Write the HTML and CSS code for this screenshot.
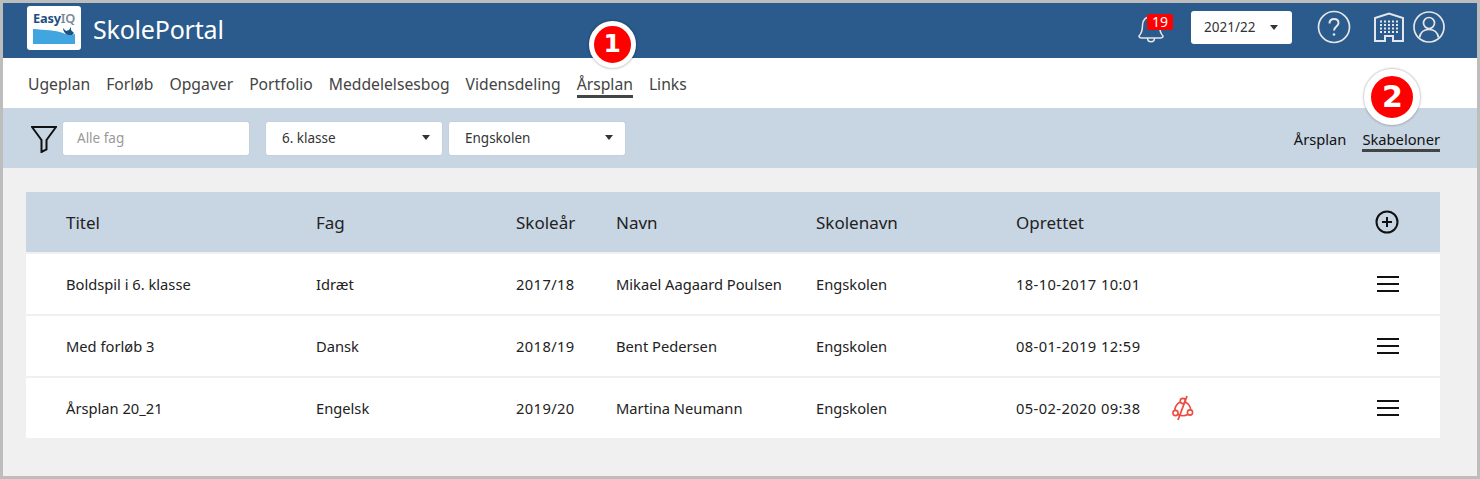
FILE: index.html
```html
<!DOCTYPE html>
<html lang="da">
<head>
<meta charset="utf-8">
<title>SkolePortal</title>
<link rel="stylesheet" href="styles.css">
</head>
<body>
<div class="frame">
  <header class="topbar">
    <div class="brand">
      <div class="logo">
        <span class="logo-text">Easy<b>IQ</b></span>
        <svg class="logo-art" width="42" height="18" viewBox="0 0 42 18"><path d="M0 2 C12 3 22 3 30 6 C34 8 38 8 42 7 V17 H0Z" fill="#41a5e0"/><path d="M30 1 L33 4 L36 3 L38 0 L38 3 L41 6 L39 8 L35 8 C32 7 30 4 30 1Z" fill="#1d4f80"/></svg>
      </div>
      <span class="brand-name">SkolePortal</span>
    </div>
    <div class="top-actions">
      <div class="bell">
        <svg width="28" height="30" viewBox="0 0 28 30" fill="none" stroke="#e6e6e6" stroke-width="1.5"><path d="M2 23 C5 20 5.500 16 5.500 12 C5.500 7 9 3.500 14 3.500 C19 3.500 22.500 7 22.500 12 C22.500 16 23 20 26 23 C26 24.500 25 25 23 25 H5 C3 25 2 24.500 2 23Z"/><path d="M10.500 25 C10.500 30 17.500 30 17.500 25"/></svg>
        <span class="count">19</span>
      </div>
      <div class="year-select"><span>2021/22</span><i class="caret"></i></div>
      <svg class="help" width="34" height="34" viewBox="0 0 34 34" fill="none" stroke="#e6e6e6" stroke-width="1.700"><circle cx="17" cy="17" r="15.500"/><path d="M12.500 13.500 C12.500 10.500 14.500 9 17 9 C19.700 9 21.500 10.700 21.500 13 C21.500 16.500 17 16.500 17 20.500" stroke-width="2"/><circle cx="17" cy="24.500" r="1.300" fill="#e6e6e6" stroke="none"/></svg>
      <svg class="school" width="30" height="30" viewBox="0 0 30 30" fill="none" stroke="#e3e6ea" stroke-width="2"><path d="M1 29 V6 L15 1.500 L29 6 V29 H19 V24 H11 V29Z"/><path d="M6 9.500h18M6 13h18M6 16.500h18M6 20h18" stroke-dasharray="2 2" stroke-width="2"/></svg>
      <svg class="user" width="32" height="32" viewBox="0 0 32 32" fill="none" stroke="#e6e6e6" stroke-width="1.700"><circle cx="16" cy="16" r="15"/><circle cx="16" cy="12" r="5.500"/><path d="M6.500 26.500 C7.500 20.500 11 18.500 16 18.500 C21 18.500 24.500 20.500 25.500 26.500"/></svg>
    </div>
  </header>

  <nav class="mainnav">
    <a>Ugeplan</a>
    <a>Forløb</a>
    <a>Opgaver</a>
    <a>Portfolio</a>
    <a>Meddelelsesbog</a>
    <a>Vidensdeling</a>
    <a class="active">Årsplan<span class="marker marker-one">1</span></a>
    <a>Links</a>
  </nav>

  <section class="filterbar">
    <svg class="funnel" width="26" height="28" viewBox="0 0 26 28" fill="none" stroke="#111" stroke-width="2"><path d="M1 2 H25 L15.500 15 V24.500 L10.500 27 V15Z"/></svg>
    <div class="field field-subject">Alle fag</div>
    <div class="field field-select"><span>6. klasse</span><i class="caret"></i></div>
    <div class="field field-select field-school"><span>Engskolen</span><i class="caret"></i></div>
    <div class="tabs">
      <a>Årsplan</a>
      <a class="active">Skabeloner<span class="marker marker-two">2</span></a>
    </div>
  </section>

  <main class="content">
    <div class="table">
      <div class="row head">
        <span>Titel</span><span>Fag</span><span>Skoleår</span><span>Navn</span><span>Skolenavn</span><span>Oprettet</span><span></span>
        <svg class="icon-right" width="24" height="24" viewBox="0 0 24 24" fill="none" stroke="#111" stroke-width="2"><circle cx="12" cy="12" r="10.500"/><path d="M7 12h10M12 7v10"/></svg>
      </div>
      <div class="row">
        <span>Boldspil i 6. klasse</span><span>Idræt</span><span class="num">2017/18</span><span>Mikael Aagaard Poulsen</span><span>Engskolen</span><span class="num">18-10-2017 10:01</span><span></span>
        <svg class="icon-right" width="22" height="18" viewBox="0 0 22 18" stroke="#111" stroke-width="2"><path d="M0 2h22M0 9h22M0 16h22"/></svg>
      </div>
      <div class="row">
        <span>Med forløb 3</span><span>Dansk</span><span class="num">2018/19</span><span>Bent Pedersen</span><span>Engskolen</span><span class="num">08-01-2019 12:59</span><span></span>
        <svg class="icon-right" width="22" height="18" viewBox="0 0 22 18" stroke="#111" stroke-width="2"><path d="M0 2h22M0 9h22M0 16h22"/></svg>
      </div>
      <div class="row">
        <span>Årsplan 20_21</span><span>Engelsk</span><span class="num">2019/20</span><span>Martina Neumann</span><span>Engskolen</span><span class="num">05-02-2020 09:38</span>
        <svg class="share" width="22" height="26" viewBox="0 0 22 26" fill="none" stroke="#ee4c40" stroke-width="1.600"><path d="M8 7 C4.500 9 3 12 2.800 15.500M13.500 7 C17 9 18.500 12 18.700 15"/><path d="M6 19.500 C9 21 13 21 16 19.500"/><circle cx="10.800" cy="6" r="2.600"/><circle cx="3.500" cy="18" r="2.600"/><circle cx="18" cy="17.500" r="2.600"/><path d="M15 1 L6 25" stroke-width="1.800"/></svg>
        <svg class="icon-right" width="22" height="18" viewBox="0 0 22 18" stroke="#111" stroke-width="2"><path d="M0 2h22M0 9h22M0 16h22"/></svg>
      </div>
    </div>
  </main>
</div>
</body>
</html>
```

FILE: styles.css
```css
* { box-sizing: border-box; }
html, body { margin: 0; height: 100%; }
body {
  font-family: "Noto Sans", "Open Sans", "DejaVu Sans", sans-serif;
  color: #222;
  background: #f0f0f0;
}
.frame {
  width: 1480px;
  height: 479px;
  border: 3px solid #bdbdbd;
  overflow: hidden;
  background: #f0f0f0;
  display: flex;
  flex-direction: column;
}
.topbar {
  height: 55px;
  background: #2a5b8c;
  display: flex;
  align-items: center;
  justify-content: space-between;
  padding: 0 32px 7px 24px;
  flex: none;
}
.brand { display: flex; align-items: center; gap: 12px; }
.logo {
  width: 54px;
  height: 44px;
  background: #fff;
  border-radius: 3px;
  padding: 4px 5px 0 6px;
  display: flex;
  flex-direction: column;
  gap: 1px;
  margin-top: 1px;
}
.logo-text { font-size: 12.8px; line-height: 16px; font-weight: 700; color: #1d4f80; white-space: nowrap; letter-spacing: -0.2px; }
.logo-text b { color: #7d8a96; font-weight: 600; }
.logo-art { display: block; }
.brand-name { color: #fff; font-size: 25px; letter-spacing: -0.2px; line-height: 30px; margin-top: 3px; }
.top-actions { display: flex; align-items: center; }
.bell { position: relative; width: 28px; height: 30px; margin-right: 26px; margin-top: 2px; }
.bell svg { display: block; }
.count {
  position: absolute;
  left: 10px;
  top: 1px;
  width: 26px;
  height: 16px;
  background: #f00;
  border-radius: 2px;
  color: #fff;
  font-size: 14px;
  line-height: 16px;
  text-align: center;
}
.year-select {
  width: 101px;
  height: 33px;
  background: #fff;
  border-radius: 3px;
  display: flex;
  align-items: center;
  justify-content: space-between;
  padding: 0 14px 0 13px;
  font-size: 13.500px;
  color: #333;
  margin-right: 25px;
}
.caret {
  width: 0;
  height: 0;
  border-left: 4px solid transparent;
  border-right: 4px solid transparent;
  border-top: 5px solid #333;
  display: block;
}
.help { margin-right: 23px; }
.school { margin-right: 9px; }
.mainnav {
  height: 50px;
  background: #fff;
  flex: none;
  display: flex;
  align-items: center;
  gap: 16px;
  padding: 0 0 0 25px;
  font-size: 15.7px;
  color: #444;
}
.mainnav a { position: relative; line-height: 20px; padding-bottom: 1px; margin-top: 3px; }
.mainnav a.active { box-shadow: 0 3px 0 #444; }
.marker {
  position: absolute;
  border-radius: 50%;
  background: #f00;
  border-style: solid;
  border-color: #fff;
  box-shadow: 0 0 2px 1px rgba(0,0,0,.2);
  color: #fff;
  font-family: "DejaVu Sans", sans-serif;
  font-weight: 700;
  text-align: center;
}
.marker-one {
  left: 12px;
  top: -53px;
  width: 47px;
  height: 47px;
  border-width: 5px;
  font-size: 25px;
  line-height: 36px;
}
.marker-two {
  left: 2px;
  top: -60px;
  width: 56px;
  height: 56px;
  border-width: 7px;
  font-size: 30px;
  line-height: 42px;
}
.filterbar {
  height: 60px;
  background: #c8d5e3;
  flex: none;
  display: flex;
  align-items: center;
  padding: 0 37px 0 28px;
  font-size: 13.5px;
}
.funnel { margin-right: 6px; margin-top: 2px; }
.field {
  height: 33px;
  background: #fff;
  border-radius: 2px;
  display: flex;
  align-items: center;
  padding-bottom: 1px;
  box-shadow: 0 0 1px rgba(0,0,0,.2);
}
.field-subject { width: 186px; padding-left: 14px; color: #999; margin-right: 17px; }
.field-select { width: 176px; padding-left: 16px; padding-right: 12px; justify-content: space-between; color: #333; margin-right: 7px; }
.field-school { margin-right: 0; }
.tabs { margin-left: auto; display: flex; gap: 16px; font-size: 14.7px; color: #111; }
.tabs a { position: relative; line-height: 20px; margin-top: 1px; }
.tabs a.active { box-shadow: 0 3px 0 #444; }
.content { padding: 24px 37px 0 23px; flex: 1; }
.table { display: flex; flex-direction: column; gap: 2px; background: #f0f0f0; }
.row {
  height: 60px;
  background: #fff;
  display: grid;
  grid-template-columns: 250px 200px 100px 200px 200px 156px 1fr 24px;
  align-items: center;
  padding: 0 40px 0 40px;
  font-size: 14.7px;
  color: #222;
}
.row.head { background: #c8d5e3; font-size: 17px; color: #222; }
.num { letter-spacing: 0.4px; }
.share { display: block; }
.icon-right { justify-self: end; margin-right: 1px; }
```
